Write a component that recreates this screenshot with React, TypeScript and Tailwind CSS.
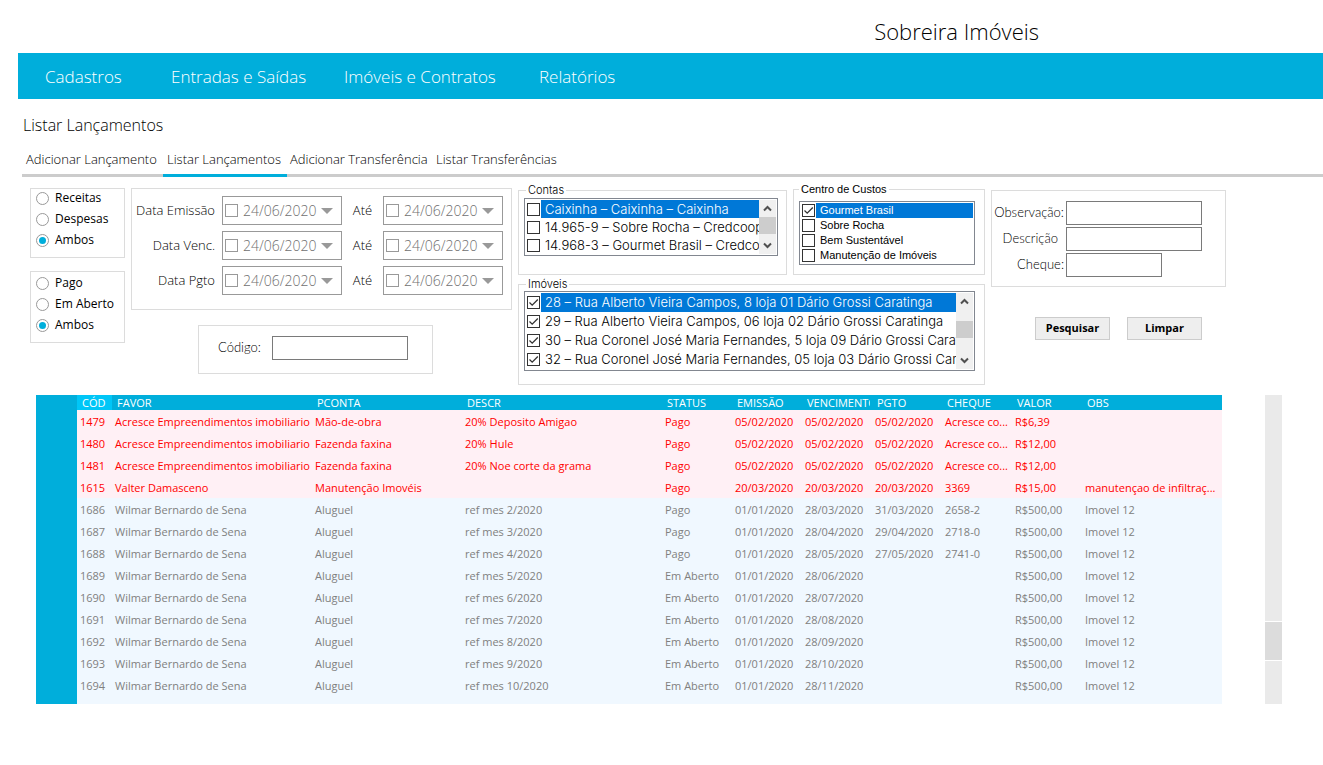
import React from "react";

type Item = { text: string; checked: boolean };

const contas: Item[] = [
  { text: "Caixinha – Caixinha – Caixinha", checked: false },
  { text: "14.965-9 – Sobre Rocha – Credcooper", checked: false },
  { text: "14.968-3 – Gourmet Brasil – Credcooper", checked: false },
];

const centros: Item[] = [
  { text: "Gourmet Brasil", checked: true },
  { text: "Sobre Rocha", checked: false },
  { text: "Bem Sustentável", checked: false },
  { text: "Manutenção de Imóveis", checked: false },
];

const imoveis: Item[] = [
  { text: "28 – Rua Alberto Vieira Campos, 8 loja 01 Dário Grossi Caratinga", checked: true },
  { text: "29 – Rua Alberto Vieira Campos, 06 loja 02 Dário Grossi Caratinga", checked: true },
  { text: "30 – Rua Coronel José Maria Fernandes, 5 loja 09 Dário Grossi Caratinga", checked: true },
  { text: "32 – Rua Coronel José Maria Fernandes, 05 loja 03 Dário Grossi Caratinga", checked: true },
];

const columns = ["CÓD", "FAVOR", "PCONTA", "DESCR", "STATUS", "EMISSÃO", "VENCIMENTO", "PGTO", "CHEQUE", "VALOR", "OBS"];

const acresce = "Acresce Empreendimentos imobiliario";
const despesas: string[][] = [
  ["1479", acresce, "Mão-de-obra", "20% Deposito Amigao", "Pago", "05/02/2020", "05/02/2020", "05/02/2020", "Acresce co...", "R$6,39", ""],
  ["1480", acresce, "Fazenda faxina", "20% Hule", "Pago", "05/02/2020", "05/02/2020", "05/02/2020", "Acresce co...", "R$12,00", ""],
  ["1481", acresce, "Fazenda faxina", "20% Noe corte da grama", "Pago", "05/02/2020", "05/02/2020", "05/02/2020", "Acresce co...", "R$12,00", ""],
  ["1615", "Valter Damasceno", "Manutenção Imovéis", "", "Pago", "20/03/2020", "20/03/2020", "20/03/2020", "3369", "R$15,00", "manutençao de infiltraç..."],
];

const pagos: Record<number, [string, string]> = {
  2: ["31/03/2020", "2658-2"],
  3: ["29/04/2020", "2718-0"],
  4: ["27/05/2020", "2741-0"],
};

const receitas: string[][] = [2, 3, 4, 5, 6, 7, 8, 9, 10].map((mes) => {
  const pago = pagos[mes];
  return [
    String(1684 + mes),
    "Wilmar Bernardo de Sena",
    "Aluguel",
    `ref mes ${mes}/2020`,
    pago ? "Pago" : "Em Aberto",
    "01/01/2020",
    `28/${String(mes + 1).padStart(2, "0")}/2020`,
    pago ? pago[0] : "",
    pago ? pago[1] : "",
    "R$500,00",
    "Imovel 12",
  ];
});

function CheckBox({ checked, label, tone }: { checked: boolean; label?: string; tone: string }) {
  return (
    <span className="grid size-[13px] shrink-0">
      <input
        type="checkbox"
        defaultChecked={checked}
        aria-label={label}
        className={`peer col-start-1 row-start-1 size-[13px] appearance-none border bg-white ${tone}`}
      />
      <svg
        viewBox="0 0 13 13"
        className="pointer-events-none invisible col-start-1 row-start-1 size-[13px] peer-checked:visible"
        fill="none"
        stroke="#333"
        strokeWidth="1.3"
      >
        <path d="M2.5 6.5 5.2 9.2 10.8 3.5" />
      </svg>
    </span>
  );
}

function ScrollColumn({ spacer }: { spacer: string }) {
  return (
    <div className="flex w-[17px] shrink-0 flex-col items-center bg-[#f0f0f0]">
      <svg viewBox="0 0 17 17" className="size-[17px]" fill="none" stroke="#505050" strokeWidth="2">
        <path d="M5 10.5 8.5 7 12 10.5" />
      </svg>
      <div className={spacer} />
      <div className="h-[17px] w-full bg-[#cdcdcd]" />
      <div className="flex-1" />
      <svg viewBox="0 0 17 17" className="size-[17px]" fill="none" stroke="#505050" strokeWidth="2">
        <path d="M5 6.5 8.5 10 12 6.5" />
      </svg>
    </div>
  );
}

function CheckList({ items, row, spacer }: { items: Item[]; row: string; spacer?: string }) {
  return (
    <div className="flex border border-[#828790] bg-white p-px">
      <ul className="min-w-0 flex-1">
        {items.map((item, i) => (
          <li key={item.text}>
            <label className={`flex items-center gap-px pl-px whitespace-nowrap ${row}`}>
              <CheckBox checked={item.checked} tone="border-[#333333]" />
              <span className={`min-w-0 flex-1 overflow-hidden pl-1 ${i === 0 ? "bg-[#0078d7] text-white" : ""}`}>
                {item.text}
              </span>
            </label>
          </li>
        ))}
      </ul>
      {spacer && <ScrollColumn spacer={spacer} />}
    </div>
  );
}

function RadioBox({ name, options, padding }: { name: string; options: string[]; padding: string }) {
  return (
    <div role="radiogroup" aria-label={name} className={`flex flex-col gap-[3px] border border-[#dcdcdc] pl-[5px] text-[12px] leading-[18px] ${padding}`}>
      {options.map((option, i) => (
        <label key={option} className="flex items-center gap-[6px]">
          <span className="grid size-[13px] place-items-center">
            <input
              type="radio"
              name={name}
              defaultChecked={i === 2}
              className="peer col-start-1 row-start-1 size-[13px] appearance-none rounded-full border border-[#999999]"
            />
            <span className="pointer-events-none invisible col-start-1 row-start-1 size-[7px] rounded-full bg-[#00aedb] peer-checked:visible" />
          </span>
          {option}
        </label>
      ))}
    </div>
  );
}

function DatePicker({ label }: { label: string }) {
  return (
    <div className="flex h-[29px] w-[120px] items-center border border-[#999999] pl-[2px]">
      <CheckBox checked={false} label={`Usar ${label}`} tone="border-[#999999]" />
      <button type="button" aria-label={`${label}: 24/06/2020`} className="flex flex-1 items-center gap-[5px] pl-[5px] text-[14px] font-light text-[#707070]">
        24/06/2020
        <svg viewBox="0 0 12 6" className="h-[6px] w-3" fill="#999">
          <path d="M0 0H12L6 6Z" />
        </svg>
      </button>
    </div>
  );
}

function TextField({ id, label, width, inset = "" }: { id: string; label: string; width: string; inset?: string }) {
  return (
    <>
      <label htmlFor={id} className={`text-right ${inset}`}>
        {label}
      </label>
      <input id={id} type="text" className={`h-6 border border-[#7a7a7a] bg-white px-1 text-[12px] ${width}`} />
    </>
  );
}

function Rows({ rows, tone }: { rows: string[][]; tone: string }) {
  return (
    <tbody className={tone}>
      {rows.map((row) => (
        <tr key={row[0]} className="h-[22px]">
          <th aria-hidden="true" className="bg-[#00aedb]" />
          {row.map((cell, i) => (
            <td key={i} className="overflow-hidden pl-[3px] whitespace-nowrap">
              {cell}
            </td>
          ))}
        </tr>
      ))}
    </tbody>
  );
}

export default function App() {
  return (
    <div className="min-h-screen bg-white font-['Open_Sans',sans-serif] text-black">
      <header>
        <div className="flex h-[53px] items-center justify-end pt-[9px] pr-[284px]">
          <h1 className="text-[22px] leading-8 font-light">Sobreira Imóveis</h1>
        </div>
        <nav className="ml-[18px] flex h-[46px] items-center bg-[#00aedb] pt-px pl-[27px] text-[17px] font-light text-white">
          <a href="#cadastros" className="w-[126px]">Cadastros</a>
          <a href="#entradas" className="w-[173px]">Entradas e Saídas</a>
          <a href="#imoveis" className="w-[195px]">Imóveis e Contratos</a>
          <a href="#relatorios">Relatórios</a>
        </nav>
      </header>

      <main>
        <h2 className="px-[23px] pt-[14px] text-[16px] leading-6 font-light">Listar Lançamentos</h2>
        <nav className="mt-[10px] ml-[22px] flex h-[30px] border-b-[3px] border-[#cccccc] text-[13px] leading-6 font-light">
          <a href="#adicionar" className="w-[141px] pl-1">Adicionar Lançamento</a>
          <a href="#listar" aria-current="page" className="h-[30px] w-[124px] border-b-[3px] border-[#00aedb] pl-1">Listar Lançamentos</a>
          <a href="#transferir" className="w-[146px] pl-[3px]">Adicionar Transferência</a>
          <a href="#transferencias" className="pl-[3px]">Listar Transferências</a>
        </nav>

        <form className="flex gap-[6px] pl-[30px]">
          <div className="flex w-[95px] flex-col gap-[13px] pt-[11px]">
            <RadioBox name="tipo" options={["Receitas", "Despesas", "Ambos"]} padding="pb-2" />
            <RadioBox name="situacao" options={["Pago", "Em Aberto", "Ambos"]} padding="pt-[2px] pb-2" />
          </div>

          <div className="flex w-[381px] flex-col pt-[11px]">
            <div className="flex flex-col gap-[6px] border border-[#dcdcdc] pt-[7px] pb-[14px] text-[13px] font-light">
              {["Data Emissão", "Data Venc.", "Data Pgto"].map((label) => (
                <div key={label} className="flex items-center">
                  <span className="w-[83px] text-right">{label}</span>
                  <span className="w-[7px]" />
                  <DatePicker label={label} />
                  <span className="w-[41px] text-center">Até</span>
                  <DatePicker label={`${label} até`} />
                </div>
              ))}
            </div>
            <div className="mt-[15px] ml-[67px] flex w-[235px] items-center gap-[11px] border border-[#dcdcdc] py-[10px] pb-[13px] pl-[19px] font-['Lato',sans-serif] text-[13px] font-light">
              <TextField id="codigo" label="Código:" width="w-[136px]" />
            </div>
          </div>

          <div className="flex w-[467px] min-w-0 flex-col">
            <div className="flex gap-[6px]">
              <fieldset className="mt-[7px] w-[269px] min-w-0 shrink-0 border border-[#dcdcdc] pt-[2px] pr-2 pb-[18px] pl-[5px]">
                <legend className="ml-[2px] px-[2px] font-['Inter',sans-serif] text-[11px] leading-3 font-light">Contas</legend>
                <div className="font-['Inter',sans-serif] text-[13px] font-light">
                  <CheckList items={contas} row="leading-[18px]" spacer="h-0" />
                </div>
              </fieldset>
              <fieldset className="mt-[6px] w-[192px] min-w-0 border border-[#dcdcdc] pt-[6px] pr-[9px] pb-[9px] pl-[5px] font-['Liberation_Sans',sans-serif] text-[11px]">
                <legend className="px-[2px] leading-3">Centro de Custos</legend>
                <CheckList items={centros} row="leading-[15px]" />
              </fieldset>
            </div>
            <fieldset className="mt-[3px] min-w-0 border border-[#dcdcdc] pt-px pr-[9px] pb-[13px] pl-[5px]">
              <legend className="ml-[2px] px-[2px] font-['Inter',sans-serif] text-[11px] leading-3 font-light">Imóveis</legend>
              <div className="font-['Inter',sans-serif] text-[13px] font-light">
                <CheckList items={imoveis} row="leading-[19px]" spacer="h-[11px]" />
              </div>
            </fieldset>
          </div>

          <div className="w-[235px] pt-[13px]">
            <div className="grid grid-cols-[72px_1fr] items-center gap-x-[2px] gap-y-[2px] border border-[#dcdcdc] pt-[10px] pb-[9px] font-['Lato',sans-serif] text-[13px] font-light">
              <TextField id="observacao" label="Observação:" width="w-[136px]" />
              <TextField id="descricao" label="Descrição" width="w-[136px]" inset="pr-[6px]" />
              <TextField id="cheque" label="Cheque:" width="w-[96px]" />
            </div>
            <div className="mt-[30px] flex gap-[17px] pl-[44px] text-[11px] font-bold">
              <button type="submit" className="h-[23px] w-[75px] border border-[#cccccc] bg-[#eeeeee]">Pesquisar</button>
              <button type="reset" className="h-[23px] w-[75px] border border-[#cccccc] bg-[#eeeeee]">Limpar</button>
            </div>
          </div>
        </form>

        <section className="mt-[10px] flex gap-[43px] pr-[41px] pl-9">
          <table className="w-full min-w-0 flex-1 table-fixed border-collapse text-left text-[11px] leading-[15px]">
            <colgroup>
              <col className="w-[41px]" />
              <col className="w-[35px]" />
              <col className="w-[200px]" />
              <col className="w-[150px]" />
              <col className="w-[200px]" />
              <col className="w-[70px]" />
              <col className="w-[70px]" />
              <col className="w-[70px]" />
              <col className="w-[70px]" />
              <col className="w-[70px]" />
              <col className="w-[70px]" />
              <col />
            </colgroup>
            <thead className="bg-[#00aedb] text-white">
              <tr className="h-[15px]">
                <td />
                {columns.map((column, i) => (
                  <th key={column} scope="col" className={`pr-[2px] pl-[5px] font-normal whitespace-nowrap ${i === 0 ? "bg-[#00c6f7]" : ""}`}>
                    <div className="overflow-hidden">{column}</div>
                  </th>
                ))}
              </tr>
            </thead>
            <Rows rows={despesas} tone="bg-[#fff0f5] text-[#ff0000]" />
            <Rows rows={receitas} tone="bg-[#f0f8ff] text-[#808080]" />
            <tfoot>
              <tr className="h-2">
                <td className="bg-[#00aedb]" />
                <td colSpan={11} className="bg-[#f0f8ff]" />
              </tr>
            </tfoot>
          </table>
          <div className="flex w-[17px] flex-col bg-[#eaeaea]">
            <div className="flex-1" />
            <div className="h-10 border-y border-white bg-[#dcdcdc]" />
            <div className="h-[43px]" />
          </div>
        </section>
      </main>
    </div>
  );
}
